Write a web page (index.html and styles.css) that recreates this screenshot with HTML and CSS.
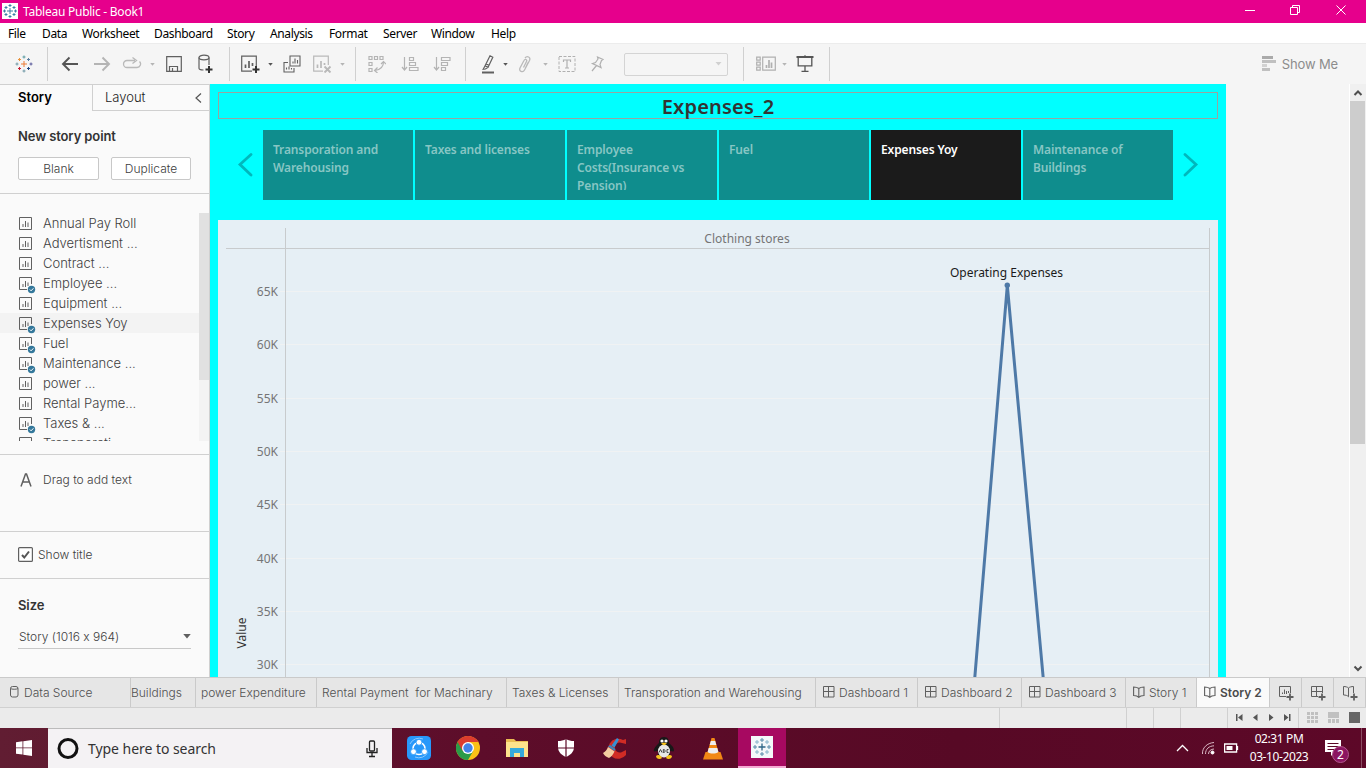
FILE: index.html
```html
<!DOCTYPE html>
<html lang="en">
<head>
<meta charset="utf-8">
<title>Tableau Public - Book1</title>
<link rel="stylesheet" href="styles.css">
</head>
<body>
<svg class="defs" width="0" height="0" aria-hidden="true">
  <defs>
    <symbol id="caret" viewBox="0 0 6 4"><path d="M0 0h6L3 3.6z" fill="currentColor"/></symbol>
    <symbol id="sheet" viewBox="0 0 18 18"><path d="M1.500.500h12v12h-12zM5 10V7M7.500 10V4M10 10V5.500" fill="none" stroke="#606060" stroke-width="1"/></symbol>
    <symbol id="used" viewBox="0 0 18 18"><path d="M9 12.500H1.500V.500h12V7M5 10V7M7.500 10V4M10 9V5.500" fill="none" stroke="#606060" stroke-width="1"/><circle cx="13.500" cy="12.500" r="3.700" fill="#34789b"/><path d="M11.800 12.500l1.300 1.300 2.300-2.500" fill="none" stroke="#fff"/></symbol>
    <symbol id="dash" viewBox="0 0 12 12"><path d="M.5.500h10.500v10.500H.500zM5.500.500v10.500M.500 5.500h10.500" fill="none" stroke="#606060"/></symbol>
    <symbol id="book" viewBox="0 0 12 12"><path d="M.600 1c2 0 4 .5 5.200 1.500C7 1.500 9 1 11 1v8.500c-2 0-4 .4-5.200 1.800C4.600 9.900 2.600 9.500.600 9.500zM5.800 2.500v8.700" fill="none" stroke="#606060" stroke-width="1.100"/></symbol>
  </defs>
</svg>
<div class="screen">
  <header class="titlebar">
    <svg class="app-logo" width="16" height="16" viewBox="0 0 16 16"><path fill="#fff" d="M0 0h16v16H0z"/><path d="M8 5v6M5 8h6M8 1v3M6.500 2.500h3M8 12v3M6.500 13.500h3M2.500 6.500v3M1 8h3M13.500 6.500v3M12 8h3M4 3v3M2.500 4.500h3M12 3v3M10.500 4.500h3M4 10v3M2.500 11.500h3M12 10v3M10.500 11.500h3" stroke="#3a7fa6"/></svg>
    <span class="app-name">Tableau Public - Book1</span>
    <svg class="window-buttons" width="126" height="23" viewBox="0 0 126 23" fill="none" stroke="#fff"><path d="M5 10.500h10M50.500 7.500h7v7h-7zM52.500 7V5.500h7v7H58M96.500 5.500l9 9M105.500 5.500l-9 9"/></svg>
  </header>
  <nav class="menubar">
    <span>File</span><span>Data</span><span>Worksheet</span><span>Dashboard</span><span>Story</span><span>Analysis</span><span>Format</span><span>Server</span><span>Window</span><span>Help</span>
  </nav>
  <div class="toolbar">
    <div class="group g-home">
      <svg width="18" height="18" viewBox="0 0 18 18" fill="none"><path d="M9 6v6M6 9h6" stroke="#eb7a35"/><path d="M4.500 3v3M3 4.500h3" stroke="#e8933d"/><path d="M13.500 3v3M12 4.500h3" stroke="#5c7fa0"/><path d="M4.500 12v3M3 13.500h3" stroke="#c72037"/><path d="M13.500 12v3M12 13.500h3" stroke="#1f447e"/><path d="M9 .5v3M7.500 2h3" stroke="#5b9aa0"/><path d="M9 14.500v3M7.500 16h3" stroke="#7199a6"/><path d="M2 7.500v3M.5 9h3" stroke="#7199a6"/><path d="M16 7.500v3M14.500 9h3" stroke="#59589a"/></svg>
    </div>
    <div class="group g-file">
      <svg width="18" height="16" viewBox="0 0 18 16" fill="none" stroke="#555" stroke-width="1.900"><path d="M17 8H2M8.500 1.500L2 8l6.500 6.500"/></svg>
      <svg width="18" height="16" viewBox="0 0 18 16" fill="none" stroke="#b4b4b4" stroke-width="1.900"><path d="M1 8h15M9.500 1.500L16 8l-6.500 6.500"/></svg>
      <svg width="20" height="14" viewBox="0 0 20 14" fill="none" stroke="#b9b9b9" stroke-width="1.300"><path d="M13 3.500H5a3.500 3.500 0 0 0 0 7h10a3.500 3.500 0 0 0 2.500-6M10.500.5l4 3-4 3"/></svg>
      <svg class="caret pale" width="5" height="3"><use href="#caret"/></svg>
      <svg width="16" height="16" viewBox="0 0 16 16" fill="none" stroke="#606060" stroke-width="1.200"><path d="M.7.7h14.600v14.600H.7zM3.500 15v-4.500h8V15M6.500 12v3"/></svg>
      <svg width="18" height="20" viewBox="0 0 18 20" fill="none" stroke="#606060" stroke-width="1.200"><ellipse cx="7" cy="3.500" rx="5" ry="2.300"/><path d="M2 3.500v10.800c0 1 2 1.700 4.500 1.700M12 3.500V11"/><path d="M12 12v7M8.500 15.500h7" stroke="#333" stroke-width="2"/></svg>
    </div>
    <div class="group g-sheet">
      <svg width="20" height="18" viewBox="0 0 20 18" fill="none" stroke="#606060" stroke-width="1.200"><path d="M12 16.200H1.700V1.200h14.600V11"/><path d="M5.500 13V9.500M9 13V6M12.500 11V8" stroke-width="1.700"/><path d="M16 11v7M12.500 14.500h7" stroke="#333" stroke-width="2"/></svg>
      <svg class="caret dark" width="5" height="3"><use href="#caret"/></svg>
      <svg width="18" height="18" viewBox="0 0 18 18" fill="none" stroke="#606060" stroke-width="1.100"><path d="M7 1h10v10H7zM10 8.500v-2M12 8.500V3.500M14.500 8.500V5M5 7.500H1V17h10v-4M3.500 14.500v-2M6 14.500v-3M8.500 14.500v-1.500"/></svg>
      <svg width="20" height="18" viewBox="0 0 20 18" fill="none" stroke="#b9b9b9" stroke-width="1.200"><path d="M11 16.200H1.700V1.200h14.600V10"/><path d="M5.500 13V9.500M9 13V6M12.500 10V8" stroke-width="1.700"/><path d="M12.500 11.500l6 6M18.500 11.500l-6 6" stroke-width="1.900"/></svg>
      <svg class="caret pale" width="5" height="3"><use href="#caret"/></svg>
    </div>
    <div class="group g-sort">
      <svg width="18" height="18" viewBox="0 0 18 18" fill="none" stroke="#b4b4b4" stroke-width="1.200"><path d="M1 1.500h3v3H1zM6.500 1.500h3v3h-3zM12 1.500h3v3h-3zM1 7.500h3v3H1zM1 13.500h3v3H1zM15.500 7c0 5-2.500 7.500-8.500 8.500M13 9l2.500-2.500L18 9M9.500 12.500L6.500 15.500 9.500 18"/></svg>
      <svg width="18" height="16" viewBox="0 0 18 16" fill="none" stroke="#b4b4b4" stroke-width="1.200"><path d="M3.500 1v13M1 11l2.500 3L6 11M8.500 1.500h4v3h-4zM8.500 6.500h6v3h-6zM8.500 11.500H17v3H8.500z"/></svg>
      <svg width="18" height="16" viewBox="0 0 18 16" fill="none" stroke="#b4b4b4" stroke-width="1.200"><path d="M3.500 1v13M1 11l2.500 3L6 11M8.500 1.500H17v3H8.500zM8.500 6.500h6v3h-6zM8.500 11.500h4v3h-4z"/></svg>
    </div>
    <div class="group g-mark">
      <svg width="14" height="19" viewBox="0 0 14 19" fill="none" stroke="#606060" stroke-width="1.200"><path d="M9 .8l2.800 1.400-4.700 10-3-1.500zM4.100 10.700l-1.900 3.600 2.200-.3 2.700-1.800M5 8.900l3 1.400"/><path d="M1 17.500h12" stroke-width="2"/></svg>
      <svg class="caret dark" width="5" height="3"><use href="#caret"/></svg>
      <svg width="14" height="17" viewBox="0 0 14 17" fill="none" stroke="#b9b9b9" stroke-width="1.300"><path d="M5.500 11.500l3-6c1-2-1.500-3-2.500-1L2 12c-1.500 3.500 3 5 4.500 2l5-9.500c1.500-3.500-2.500-5-4.500-2.500M7 13l3-6.500"/></svg>
      <svg class="caret pale" width="5" height="3"><use href="#caret"/></svg>
      <svg width="18" height="16" viewBox="0 0 18 16" fill="none" stroke="#b0b0b0"><path d="M1 .5h16v15H1z" stroke-dasharray="3 1.500"/><path d="M5.500 6V4h7v2M9 4v8M7 12h4" stroke-width="1.200"/></svg>
      <svg width="14" height="16" viewBox="0 0 14 16" fill="none" stroke="#b0b0b0" stroke-width="1.200"><path d="M7.500 1l5.500 2.500-1.500 1-1.500 4 1 3L2.500 7.500l3-1 2.500-3.500zM6.500 9.500L2 15"/></svg>
      <div class="fit-select"><svg class="caret" width="7" height="4"><use href="#caret"/></svg></div>
    </div>
    <div class="group g-show">
      <svg width="20" height="16" viewBox="0 0 20 16" fill="none" stroke="#b0b0b0" stroke-width="1.200"><path d="M.7 1.200h3.500v3H.7zM.7 6.200h3.500v3H.7zM.7 11.200h3.500v3H.7zM6.700 1.200h12.600v13H6.700z"/><path d="M10.500 12V9M13 12V4M15.500 12V6.500" stroke-width="1.700"/></svg>
      <svg class="caret pale" width="5" height="3"><use href="#caret"/></svg>
      <svg width="18" height="18" viewBox="0 0 18 18" fill="none" stroke="#555" stroke-width="1.300"><path d="M.5 2h17" stroke-width="2"/><path d="M2.200 2v8.800h13.600V2M9 11v5M5.500 16.300h7M9 .3V2"/></svg>
    </div>
    <div class="show-me"><svg width="14" height="15" viewBox="0 0 14 15"><path fill="#aaa" d="M0 0h11v3H0z"/><path fill="#c0c0c0" d="M0 4h14v3H0zM0 12h8v3H0z"/><path fill="#d2d2d2" d="M0 8h5v3H0z"/></svg><span>Show Me</span></div>
  </div>

  <main class="workspace">
    <aside class="sidebar">
      <div class="pane-tabs"><div class="pane-tab active">Story</div><div class="pane-tab layout"><span>Layout</span><svg width="7" height="10" viewBox="0 0 7 10" fill="none" stroke="#555" stroke-width="1.200"><path d="M6 .5L1 5l5 4.500"/></svg></div></div>
      <section class="new-point">
        <h2>New story point</h2>
        <div class="buttons"><button>Blank</button><button>Duplicate</button></div>
      </section>
      <section class="sheets">
        <ul>
          <li><svg><use href="#sheet"/></svg><span>Annual Pay Roll</span></li>
          <li><svg><use href="#sheet"/></svg><span>Advertisment ...</span></li>
          <li><svg><use href="#sheet"/></svg><span>Contract ...</span></li>
          <li><svg><use href="#used"/></svg><span>Employee ...</span></li>
          <li><svg><use href="#sheet"/></svg><span>Equipment ...</span></li>
          <li class="hover"><svg><use href="#used"/></svg><span>Expenses Yoy</span></li>
          <li><svg><use href="#used"/></svg><span>Fuel</span></li>
          <li><svg><use href="#used"/></svg><span>Maintenance ...</span></li>
          <li><svg><use href="#sheet"/></svg><span>power ...</span></li>
          <li><svg><use href="#sheet"/></svg><span>Rental Payme...</span></li>
          <li><svg><use href="#used"/></svg><span>Taxes &amp; ...</span></li>
          <li><svg><use href="#sheet"/></svg><span>Transporati...</span></li>
        </ul>
        <div class="list-scroll"><div></div></div>
      </section>
      <section class="add-text"><svg width="12" height="14" viewBox="0 0 12 14" fill="none" stroke="#606060" stroke-width="1.500"><path d="M1 13.500L5.500 1h1L11 13.500M3 9h6"/></svg><span>Drag to add text</span></section>
      <section class="show-title"><svg width="15" height="15" viewBox="0 0 15 15" fill="none"><rect x=".6" y=".6" width="13.800" height="13.800" rx="1" fill="#fff" stroke="#606060" stroke-width="1.200"/><path d="M4 8l2.300 2.500L11 4.500" stroke="#555" stroke-width="2"/></svg><span>Show title</span></section>
      <section class="size">
        <h2>Size</h2>
        <div class="size-select"><span>Story (1016 x 964)</span><svg class="caret" width="8" height="5"><use href="#caret"/></svg></div>
      </section>
    </aside>

    <div class="story">
      <h1>Expenses_2</h1>
      <div class="navigator">
        <svg width="16" height="24" viewBox="0 0 16 24"><path d="M14 1.500L3 11.500l11 10.500"/></svg>
        <div class="points">
          <div>Transporation and Warehousing</div>
          <div>Taxes and licenses</div>
          <div>Employee Costs(Insurance vs Pension)</div>
          <div>Fuel</div>
          <div class="current">Expenses Yoy</div>
          <div>Maintenance of Buildings</div>
        </div>
        <svg width="16" height="24" viewBox="0 0 16 24"><path d="M2 1.500L13 11.500 2 22"/></svg>
      </div>
      <svg class="chart" width="1000" height="457" viewBox="218 220 1000 457">
        <g class="grid"><path d="M280 291.500h929M280 344.500h929M280 398.500h929M280 451.500h929M280 504.500h929M280 558.500h929M280 611.500h929M280 664.500h929"/></g>
        <path class="frame" d="M285.500 228v449M1209.500 228v449M226 248.500h984"/>
        <path class="series" d="M974.500 681L1007.300 285.500 1043.500 681"/>
        <circle cx="1007.300" cy="285.300" r="2.700" fill="#4e79a7"/>
        <text class="heading" x="747" y="243">Clothing stores</text>
        <text class="mark" x="1006.500" y="277">Operating Expenses</text>
        <g class="ticks"><text x="278" y="296">65K</text><text x="278" y="349">60K</text><text x="278" y="403">55K</text><text x="278" y="456">50K</text><text x="278" y="509">45K</text><text x="278" y="563">40K</text><text x="278" y="616">35K</text><text x="278" y="669">30K</text></g>
        <text class="axis" transform="translate(246 633) rotate(-90)">Value</text>
      </svg>
    </div>
    <div class="empty"></div>
    <div class="vscroll">
      <svg width="16" height="17" viewBox="0 0 16 17" fill="none" stroke="#505050" stroke-width="2"><path d="M4.500 11L8 7.500l3.500 3.500"/></svg>
      <div class="thumb"></div>
      <svg class="down" width="16" height="17" viewBox="0 0 16 17" fill="none" stroke="#505050" stroke-width="2"><path d="M4.500 6.500L8 10l3.500-3.500"/></svg>
    </div>
  </main>

  <div class="tabs">
    <div class="tab source"><svg width="9" height="12" viewBox="0 0 9 12" fill="none" stroke="#606060"><rect x=".5" y=".5" width="7.500" height="10.500" rx="2"/><path d="M.5 2.500c1 1 6.500 1 7.500 0"/></svg><span>Data Source</span></div>
    <div class="tab buildings"><span>Buildings</span></div>
    <div class="tab power"><span>power Expenditure</span></div>
    <div class="tab rental"><span>Rental Payment&nbsp; for Machinary</span></div>
    <div class="tab taxes"><span>Taxes &amp; Licenses</span></div>
    <div class="tab transport"><span>Transporation and Warehousing</span></div>
    <div class="tab d1"><svg><use href="#dash"/></svg><span>Dashboard 1</span></div>
    <div class="tab d2"><svg><use href="#dash"/></svg><span>Dashboard 2</span></div>
    <div class="tab d2"><svg><use href="#dash"/></svg><span>Dashboard 3</span></div>
    <div class="tab s1"><svg><use href="#book"/></svg><span>Story 1</span></div>
    <div class="tab s2"><svg><use href="#book"/></svg><span>Story 2</span></div>
    <div class="tab new"><svg viewBox="0 0 16 16" fill="none" stroke="#606060"><path d="M8 11.500H1.500v-10h11V8M4.500 9V7.500M6.500 9V4.500M8.500 9V6M10.500 8V6"/><path d="M12 8.500v7M8.500 12h7" stroke-width="1.800"/></svg></div>
    <div class="tab new"><svg viewBox="0 0 16 16" fill="none" stroke="#606060"><path d="M8 11.500H1.500v-10h11V8M6.500 1.500v10M1.500 6.500h11"/><path d="M12 8.500v7M8.500 12h7" stroke-width="1.800"/></svg></div>
    <div class="tab new"><svg viewBox="0 0 16 16" fill="none" stroke="#606060"><path d="M1.500 1.500c2 0 4 .5 5 1.500 1-1 3-1.500 5-1.500V8M1.500 1.500V10c2 0 4 .4 5 1.800V3"/><path d="M12 8.500v7M8.500 12h7" stroke-width="1.800"/></svg></div>
  </div>
  <div class="status">
    <i class="c1"></i><i class="c2"></i><i class="c3"></i><i class="c3"></i><i class="c4"></i>
    <svg class="paging" width="70" height="20" viewBox="1228 708 70 20" fill="#555"><path d="M1236 714h1.500v7H1236zM1242.500 714v7l-4.500-3.500zM1257.500 714v7l-4.500-3.500zM1269 714v7l4.500-3.500zM1284 714v7l4.500-3.500zM1289 714h1.500v7H1289z"/></svg>
    <svg class="views" width="68" height="20" viewBox="1299 708 67 20"><path fill="#c0c0c0" d="M1307 712h3v3h-3zM1311 712h3v3h-3zM1315 712h3v3h-3zM1307 716h3v3h-3zM1311 716h3v3h-3zM1315 716h3v3h-3zM1307 720h3v3h-3zM1311 720h3v3h-3zM1315 720h3v3h-3zM1328 712h11v6h-11zM1328 719h3v4h-3zM1332 719h3v4h-3zM1336 719h3v4h-3z"/><path fill="#666" d="M1349 712h11v11h-11z"/></svg>
  </div>

  <footer class="taskbar">
    <div class="start"><svg width="16" height="16" viewBox="0 0 16 16" fill="#fff"><path d="M0 2.200l6.500-.9v6.200H0zM7.300 1.200L16 0v7.500H7.300zM0 8.300h6.500v6.200L0 13.700zM7.300 8.300H16V16l-8.700-1.200z"/></svg></div>
    <div class="search"><svg width="22" height="22" viewBox="0 0 22 22" fill="none"><circle cx="11" cy="10.500" r="9" stroke="#111" stroke-width="3"/></svg><span>Type here to search</span><svg class="mic" width="12" height="18" viewBox="0 0 12 18" fill="none" stroke="#222" stroke-width="1.300"><rect x="3.500" y="1" width="5" height="10" rx="1"/><path d="M1 8v4.500h10V8M6 12.500V16M3 16.500h6"/></svg></div>
    <div class="app"><svg width="24" height="24" viewBox="0 0 24 24" fill="none"><rect width="24" height="24" rx="4.500" fill="#2798fa"/><path d="M3 8a10 10 0 0 1 13-5M21 16a10 10 0 0 1-13 5" stroke="#8bc9ff"/><circle cx="12" cy="12.500" r="6" stroke="#fff" stroke-width="1.600"/><g fill="#fff" stroke="#2798fa" stroke-width=".8"><circle cx="12" cy="6.300" r="2.900"/><circle cx="6.500" cy="15.700" r="2.900"/><circle cx="17.500" cy="15.700" r="2.900"/></g></svg></div>
    <div class="app"><svg width="24" height="24" viewBox="0 0 24 24"><circle cx="12" cy="12" r="12" fill="#fbc116"/><path d="M1.600 6A12 12 0 0 0 12 24l5.200-9L12 12z" fill="#2b9b48"/><path d="M12 6h10.400a12 12 0 0 0-20.800 0l5 9z" fill="#dc3c2e"/><circle cx="12" cy="12" r="6" fill="#fff"/><circle cx="12" cy="12" r="4.700" fill="#4383e8"/></svg></div>
    <div class="app"><svg width="24" height="22" viewBox="0 0 24 22"><path d="M1 2h8l2 2h12v16H1z" fill="#eabc53"/><path d="M1 5h22v15H1z" fill="#fde28c"/><path d="M5 11h14v9h-4v-4H9v4H5z" fill="#35a9dc"/></svg></div>
    <div class="app"><svg width="18" height="20" viewBox="0 0 18 20"><path d="M9 1c2.500 1.500 5 2 8 2v6c0 5-3.500 8-8 10-4.500-2-8-5-8-10V3c3 0 5.500-.5 8-2z" fill="#fff"/><path d="M9 1v18M1 10h16" stroke="#5b0a27" stroke-width="1.200"/></svg></div>
    <div class="app"><svg width="26" height="24" viewBox="0 0 26 24"><path d="M24 8V3l-3 1A10 10 0 1 0 24 19v-5l-4 2a5 5 0 1 1 0-9z" fill="#d02c25"/><path d="M15 2l2 1.500-4.500 8-3-2z" fill="#3591d4"/><path d="M8 9l5.500 4-1 2-6.500-4.500z" fill="#3886bd"/><path d="M6 11l6.500 4.500C11 19 9 21 7 22c-3-1-5-3-6-5 2-1 4-3 5-6z" fill="#f3cda1"/></svg></div>
    <div class="app"><svg width="22" height="24" viewBox="0 0 22 24"><path d="M11 1c4 0 5 3 5 6 4 3 6 7 4.500 8.500L17 15v5H5v-5l-4 .5C0 13 3 10 6 7c0-3 1-6 5-6z" fill="#181818"/><ellipse cx="11" cy="15" rx="6" ry="6.500" fill="#e8e8e8"/><circle cx="9" cy="5" r="1.600" fill="#fff"/><circle cx="13" cy="5" r="1.600" fill="#fff"/><path d="M8 7.500l3-1 3 1-3 2zM3 20c2-2 5-1 6 2-2 2-6 1-6-2zM19 20c-2-2-5-1-6 2 2 2 6 1 6-2z" fill="#f8c51c"/><path d="M6 16.500l1.500-3 1.500 3M10.300 13.500v3h1l1-1.500-1-1.500zM15.500 13.500h-1.500v3h1.500" fill="none" stroke="#444"/></svg></div>
    <div class="app"><svg width="20" height="23" viewBox="0 0 20 23"><path d="M2.500 15h15L20 22.500H0z" fill="#f28815"/><path d="M8.500 1h3L16 17c-3 2.500-9 2.500-12 0z" fill="#f28815"/><path d="M7.800 4h4.400l1.100 4H6.700zM5.700 11h8.600l1.100 4c-3 2-8 2-10.800 0z" fill="#eee"/></svg></div>
    <div class="app running"><svg width="22" height="22" viewBox="0 0 22 22"><path fill="#f4f8fa" d="M0 0h22v22H0z"/><path d="M11 7.500v7M7.500 11h7" stroke="#2e6586" stroke-width="1.300"/><path d="M11 2v4M9 4h4M11 16v4M9 18h4M4 9v4M2 11h4M18 9v4M16 11h4" stroke="#568aa8"/><path d="M6 4v4M4 6h4M16 4v4M14 6h4M6 14v4M4 16h4M16 14v4M14 16h4" stroke="#88b4ca"/></svg></div>
    <div class="tray">
      <svg width="13" height="8" viewBox="0 0 13 8" fill="none" stroke="#fff" stroke-width="1.300"><path d="M1 7l5.500-5.500L12 7"/></svg>
      <svg class="wifi" width="14" height="14" viewBox="0 0 14 14" fill="none" stroke="#d9b9c5"><path d="M1.500 13C1 7 6 2 13 1.500M4.500 13C4.500 8 8 5 13 4.800M7.500 13c0-3 2.500-5 5.500-5"/><circle cx="11.500" cy="11.500" r="1.500" fill="#fff" stroke="#fff"/></svg>
      <svg class="battery" width="15" height="10" viewBox="0 0 15 10"><path d="M.6 1h12v8H.6zM13.500 3v4" fill="none" stroke="#fff" stroke-width="1.300"/><path fill="#fff" d="M2.500 3h6v4h-6z"/></svg>
      <div class="clock"><span class="time">02:31 PM</span><span class="date">03-10-2023</span></div>
      <div class="notify"><svg width="16" height="16" viewBox="0 0 16 16"><path fill="#fff" d="M0 0h16v12h-6l-4 4v-4H0z"/><path d="M2.500 3.500h11M2.500 6.500h11M2.500 9.500h7" stroke="#5b0a27"/></svg><b>2</b></div>
    </div>
  </footer>
</div>
</body>
</html>
```
FILE: styles.css
```css
* { box-sizing: border-box; }
body { margin: 0; overflow: hidden; }
h1, h2, ul { margin: 0; padding: 0; }
svg { display: block; flex: none; }
.defs { position: absolute; }
.screen { width: 1366px; height: 768px; display: flex; flex-direction: column; overflow: hidden; font-family: "Inter", sans-serif; font-weight: 300; font-feature-settings: "calt" 0; color: #404040; background: #f5f5f5; white-space: nowrap; }

.titlebar { height: 23px; flex: none; background: #e6008c; display: flex; align-items: center; padding-left: 2px; font: 12px "Noto Sans", sans-serif; color: #fff; }
.app-logo { margin-top: -2px; }
.app-name { margin-left: 5px; letter-spacing: -.25px; }
.window-buttons { margin-left: auto; }

.menubar { height: 20px; flex: none; background: #fff; display: grid; grid-template-columns: 34px 40px 72px 73px 43px 59px 54px 48px 60px 40px; padding-left: 8px; align-items: center; font: 12px "Noto Sans", sans-serif; color: #000; letter-spacing: -.36px; }

.toolbar { height: 41px; flex: none; background: #f5f5f5; border-top: 1px solid #ececec; display: flex; align-items: center; }
.group { height: 34px; display: grid; align-items: center; justify-items: center; border-right: 1px solid #d0d0d0; }
.g-home { width: 48px; }
.g-file { width: 182px; padding-left: 6px; grid-template-columns: 32px 32px 28px 12px 32px 32px; }
.g-sheet { width: 126px; padding-left: 6px; grid-template-columns: 28px 12px 32px 28px 12px; }
.g-sort { width: 110px; padding-left: 5px; grid-template-columns: 32px 33px 32px; }
.g-mark { width: 278px; padding-left: 10px; grid-template-columns: 24px 11px 28px 12px 32px 28px 130px; }
.g-show { width: 86px; padding-left: 10px; grid-template-columns: 24px 12px 30px; }
.caret { color: #606060; }
.caret.pale { color: #b5b5b5; }
.caret.dark { color: #555; }
.fit-select { width: 104px; height: 23px; border: 1px solid #d4d4d4; border-radius: 2px; display: flex; justify-content: flex-end; align-items: center; padding-right: 5px; }
.fit-select .caret { color: #d0d0d0; }
.show-me { margin-left: auto; padding-right: 28px; padding-bottom: 1px; display: flex; align-items: center; gap: 6px; font-size: 13px; font-weight: 400; letter-spacing: -.15px; color: #8c8c8c; }

.workspace { height: 593px; flex: none; display: flex; }
.sidebar { width: 210px; background: #fafafa; border-right: 1px solid #d0d0d0; border-top: 1px solid #d0d0d0; display: flex; flex-direction: column; }
.pane-tabs { height: 26px; flex: none; display: flex; font-size: 13px; }
.pane-tab { line-height: 25px; color: #222; }
.pane-tab.active { width: 92px; padding-left: 18px; font-weight: 600; color: #000; }
.pane-tab.layout { flex: 1; border-left: 1px solid #d0d0d0; border-bottom: 1px solid #d0d0d0; padding: 0 7px 0 12px; display: flex; justify-content: space-between; align-items: center; }
.sidebar h2 { font-size: 13px; line-height: 18px; font-weight: 600; color: #333; letter-spacing: -.1px; }
.new-point { height: 83px; flex: none; border-bottom: 1px solid #d0d0d0; padding: 16px 18px 0; }
.buttons { display: flex; gap: 12px; margin-top: 12px; }
.buttons button { width: 81px; height: 23px; border: 1px solid #c8c8c8; border-radius: 2px; background: #fff; padding: 0 0 1px; font: 300 12px "Inter", sans-serif; color: #404040; }
.buttons button + button { width: 80px; }
.sheets { height: 261px; flex: none; border-bottom: 1px solid #d0d0d0; padding-top: 19px; display: flex; }
.sheets ul { width: 199px; height: 228px; overflow: hidden; list-style: none; font-size: 13px; }
.sheets li { height: 20px; display: flex; align-items: center; padding-left: 18px; gap: 7px; }
.sheets li svg { width: 18px; height: 18px; margin-top: 5px; }
.sheets li.hover { background: #f3f3f3; }
.list-scroll { width: 10px; height: 228px; background: #f3f3f3; }
.list-scroll div { height: 167px; background: #e1e1e1; }
.add-text { height: 77px; flex: none; border-bottom: 1px solid #d0d0d0; display: flex; align-items: center; padding: 0 0 27px 20px; gap: 11px; font-size: 12px; }
.show-title { height: 47px; flex: none; border-bottom: 1px solid #d0d0d0; display: flex; align-items: center; padding: 0 0 1px 18px; gap: 5px; font-size: 12px; }
.size { padding: 17px 18px 0; }
.size-select { height: 24px; margin-top: 11px; border-bottom: 1px solid #c8c8c8; display: flex; align-items: center; justify-content: space-between; font-size: 12px; padding-left: 1px; }

.story { width: 1016px; background: #0ff; padding: 8px 8px 0; font-family: "Noto Sans", sans-serif; font-weight: 400; }
.story h1 { height: 27px; border: 1px solid #98a4a0; text-align: center; font-size: 20px; line-height: 27px; font-weight: 600; color: #333; letter-spacing: .2px; }
.navigator { height: 70px; margin: 11px 0 20px; display: flex; align-items: center; justify-content: space-between; padding: 0 19px; }
.navigator > svg path { fill: none; stroke: #00b8bc; stroke-width: 2.800; stroke-linecap: round; }
.points { display: grid; grid-template-columns: repeat(6, 150px); gap: 2px; }
.points div { height: 70px; background: #0f8d8d; border: 0 solid #0f8d8d; border-width: 10px 10px; overflow: hidden; white-space: normal; font-size: 12px; line-height: 18px; font-weight: 600; letter-spacing: -.13px; color: #87c6c4; padding-top: 1px; }
.points .current { background: #1b1b1b; border-color: #1b1b1b; color: #fff; }
.chart { background: #e6eff5; font-size: 12px; }
.grid path { stroke: #f0f2f3; }
.frame { stroke: #c8cbcd; fill: none; }
.series { fill: none; stroke: #4e79a7; stroke-width: 3; }
.heading { text-anchor: middle; fill: #757575; }
.mark { text-anchor: middle; fill: #1b1b1b; }
.ticks { text-anchor: end; fill: #757575; }
.axis { text-anchor: middle; fill: #333; }

.empty { width: 123px; background: #f5f5f5; }
.vscroll { width: 17px; background: #f0f0f0; border-left: 1px solid #fff; display: flex; flex-direction: column; }
.thumb { width: 15px; height: 343px; background: #cdcdcd; }
.vscroll .down { margin-top: auto; }

.tabs { height: 31px; flex: none; display: flex; background: #e6e6e6; border-top: 1px solid #cacaca; border-bottom: 1px solid #d0d0d0; font-size: 12px; color: #505050; }
.tab { height: 29px; display: flex; align-items: center; border-right: 1px solid #cacaca; padding-left: 5px; flex: none; }
.tab svg { width: 12px; height: 12px; margin-right: 4px; margin-top: -2px; }
.tab.source { width: 131px; padding-left: 10px; }
.tab.source svg { width: 9px; margin-right: 5px; }
.tab.buildings { width: 65px; padding-left: 0; }
.tab.power { width: 121px; }
.tab.rental { width: 190px; }
.tab.taxes { width: 112px; }
.tab.transport { width: 197px; }
.tab.d1 { width: 102px; padding-left: 7px; }
.tab.d2 { width: 104px; padding-left: 7px; }
.tab.s1 { width: 71px; padding-left: 7px; }
.tab.s2 { width: 73px; padding-left: 7px; background: #fafafa; color: #4b4b4b; font-weight: 600; }
.tab.new { width: 32px; padding-left: 8px; }
.tab.new svg { width: 16px; height: 16px; margin: 0; }

.status { height: 20px; flex: none; background: #ebebeb; display: flex; }
.status i { border-right: 1px solid #d0d0d0; }
.c1 { width: 1000px; }
.c2 { width: 127px; }
.c3 { width: 27px; }
.c4 { width: 47px; }
.views { border-left: 1px solid #d0d0d0; }

.taskbar { height: 40px; flex: none; background: linear-gradient(90deg, #611d32, #5d0d2a 35%, #570925 70%, #5d0828); display: flex; }
.start { width: 48px; display: grid; place-items: center; }
.search { width: 344px; background: #f4f2f4; border-top: 1px solid #bbb; display: flex; align-items: center; padding: 0 14px 0 9px; font: 14px "Noto Sans", sans-serif; letter-spacing: -.05px; color: #333; }
.search span { margin-left: 9px; }
.search .mic { margin-left: auto; }
.app { width: 49px; display: grid; place-items: center; }
.search + .app { margin-left: 2px; }
.app.running { width: 48px; margin-left: 1px; background: #a70961; border-bottom: 2px solid #f4a9d3; }
.tray { margin-left: auto; display: flex; align-items: center; color: #fff; font: 12px "Noto Sans", sans-serif; border-right: 1px solid #8b4d62; margin-right: 4px; }
.wifi { margin-left: 12px; }
.battery { margin-left: 9px; }
.clock { width: 60px; margin-left: 10px; line-height: 18px; display: flex; flex-direction: column; align-items: center; letter-spacing: -.4px; }
.notify { position: relative; margin-left: 16px; margin-right: 20px; }
.notify b { position: absolute; left: 7px; top: 6px; width: 17px; height: 17px; border-radius: 50%; background: #8c1560; border: 1px solid #b4588f; font: 12px/15px "Noto Sans", sans-serif; text-align: center; }
```
